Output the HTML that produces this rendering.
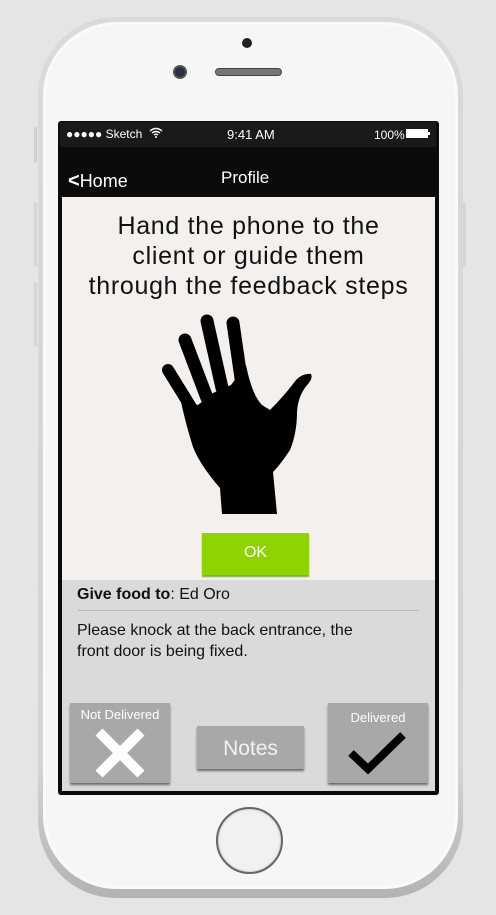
<!DOCTYPE html>
<html><head><style>
*{margin:0;padding:0;box-sizing:border-box}
body{width:496px;height:915px;background:#e5e5e5;position:relative;overflow:hidden;font-family:"Liberation Sans",sans-serif}
.abs{position:absolute}
.phone{left:38px;top:17px;width:425px;height:881px;border-radius:78px;background:linear-gradient(#dadada,#d4d4d4 85%,#b3b3b3)}
.body{left:43px;top:22px;width:415px;height:867px;border-radius:74px;background:#f6f6f6;box-shadow:inset 0 0 0 3px #fafafa}
.screen{left:58px;top:121px;width:381px;height:674px;background:#0d0b0a;border-radius:3px}
.status{left:60px;top:122px;width:376px;height:25px;background:#1b1a1a;color:#fff;font-size:12px}
.content{left:62px;top:197px;width:373px;height:383px;background:#f4f0ed}
.bottom{left:62px;top:580px;width:373px;height:211px;background:#dadada}
.btn{background:#a8a8a8;box-shadow:0 2px 2px #6a6a6a;color:#fff;text-align:center}
</style></head><body>
<div class="abs" style="left:34px;top:127px;width:3px;height:36px;background:#cfcfcf"></div>
<div class="abs" style="left:34px;top:203px;width:3px;height:64px;background:#d6d6d6"></div>
<div class="abs" style="left:34px;top:283px;width:3px;height:64px;background:#d6d6d6"></div>
<div class="abs" style="left:463px;top:203px;width:3px;height:64px;background:#d6d6d6"></div>
<div class="abs phone"></div>
<div class="abs body"></div>
<div class="abs" style="left:242px;top:38px;width:10px;height:10px;border-radius:50%;background:#222"></div>
<div class="abs" style="left:173px;top:65px;width:14px;height:14px;border-radius:50%;background:#2a3040;border:2px solid #555"></div>
<div class="abs" style="left:215px;top:68px;width:67px;height:8px;border-radius:4px;background:#777;border:1px solid #444"></div>
<div class="abs screen"></div>
<div class="abs status">
 <span class="abs" style="left:6px;top:5px">●●●●● Sketch</span>
 <svg class="abs" style="left:89px;top:5px" width="14" height="11" viewBox="0 0 14 11"><path d="M1 4 Q7 -1 13 4 M3 6 Q7 3 11 6 M5 8 Q7 6.5 9 8" stroke="#fff" stroke-width="1.4" fill="none"/><circle cx="7" cy="10" r="1" fill="#fff"/></svg>
 <span class="abs" style="left:167px;top:5px;font-size:13px">9:41 AM</span>
 <span class="abs" style="left:314px;top:6px">100%</span>
 <div class="abs" style="left:346px;top:7px;width:22px;height:9px;background:#fff"></div>
 <div class="abs" style="left:368px;top:10px;width:2px;height:3px;background:#fff"></div>
</div>
<div class="abs" style="left:68px;top:170px;color:#fff;font-size:18px"><b style="font-size:20px">&lt;</b>Home</div>
<div class="abs" style="left:221px;top:168px;color:#fff;font-size:17px">Profile</div>
<div class="abs content">
 <div style="text-align:center;font-size:25px;line-height:30px;color:#111;margin-top:14px;letter-spacing:0.7px;white-space:nowrap">Hand the phone to the<br>client or guide them<br>through the feedback steps</div>
</div>
<svg class="abs" style="left:155px;top:310px" width="165" height="210" viewBox="155 310 165 210">
<g stroke="#000" stroke-linecap="round" fill="none">
<path d="M168 370 L194 412" stroke-width="12"/>
<path d="M185 340 L207 398" stroke-width="13"/>
<path d="M207 321 L222 388" stroke-width="13"/>
<path d="M233 323 L242 385" stroke-width="13"/>
</g>
<path d="M222 514 L220 488 Q200 465 193 447 Q186 425 181 402 L198 405 L213 393 L231 385 L246 365 Q252 395 262 405 L270 410 Q285 395 296 380 Q303 373 311 374 Q313 378 308 384 Q298 395 297 412 Q297 433 290 450 Q280 465 273 472 L277 514 Z" fill="#000"/>
</svg>
<div class="abs" style="left:202px;top:533px;width:107px;height:42px;background:#8fd400;box-shadow:0 2px 1px #7ea85a;color:#fff;font-size:16px;text-align:center;line-height:40px">OK</div>
<div class="abs bottom">
 <div class="abs" style="left:15px;top:6px;font-size:16px;color:#111"><b>Give food to</b>: Ed Oro</div>
 <div class="abs" style="left:16px;top:30px;width:341px;height:1px;background:#b8b8b8"></div>
 <div class="abs" style="left:15px;top:40px;font-size:16px;line-height:21px;color:#111">Please knock at the back entrance, the<br>front door is being fixed.</div>
 <div class="abs btn" style="left:8px;top:123px;width:100px;height:80px;font-size:13px;padding-top:4px">Not Delivered
  <svg style="display:block;margin:6px auto 0" width="50" height="50" viewBox="0 0 50 50"><path d="M4 4 L46 46 M46 4 L4 46" stroke="#fff" stroke-width="10"/></svg></div>
 <div class="abs btn" style="left:135px;top:146px;width:107px;height:43px;font-size:21px;line-height:46px;color:#f2f2f2">Notes</div>
 <div class="abs btn" style="left:266px;top:123px;width:100px;height:80px;font-size:13px;padding-top:7px">Delivered
  <svg style="display:block;margin:4px auto 0" width="60" height="46" viewBox="0 0 60 46"><path d="M3 24 L20 40 L55 6" stroke="#000" stroke-width="8" fill="none"/></svg></div>
</div>
<div class="abs" style="left:216px;top:807px;width:67px;height:67px;border-radius:50%;border:2px solid #666;background:#f1f1f1;box-shadow:inset 0 0 2px #aaa"></div>
</body></html>
